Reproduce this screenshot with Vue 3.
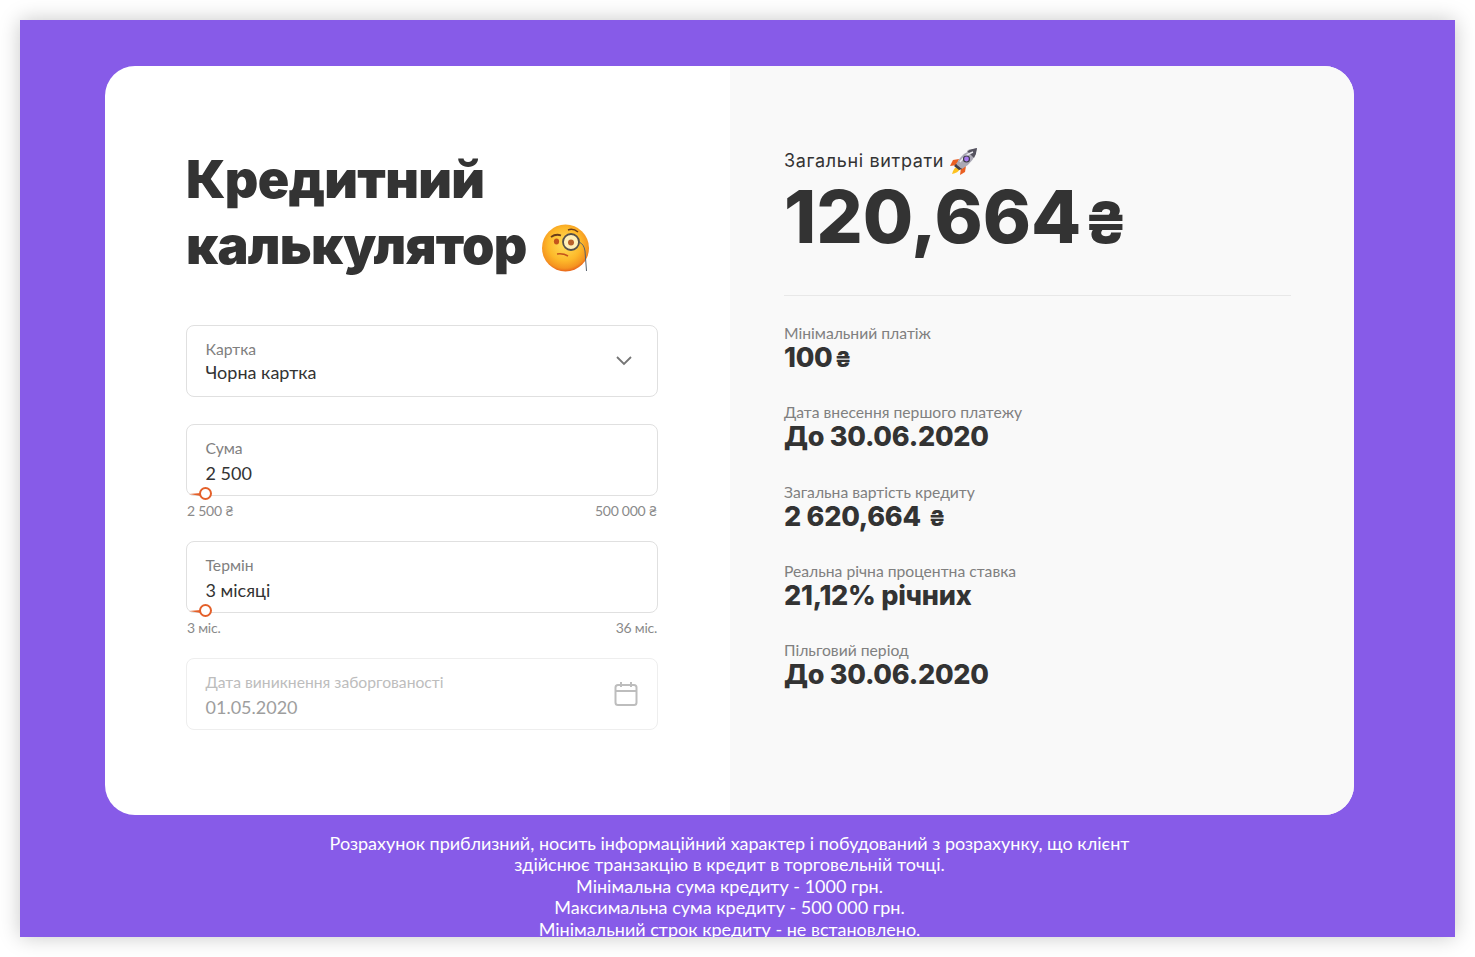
<script setup>
const stats = [
  { label: 'Мінімальний платіж', value: '100', cur: '₴' },
  { label: 'Дата внесення першого платежу', value: 'До 30.06.2020' },
  { label: 'Загальна вартість кредиту', value: '2 620,664 ', cur: '₴' },
  { label: 'Реальна річна процентна ставка', value: '21,12% річних' },
  { label: 'Пільговий період', value: 'До 30.06.2020' }
]
const note = [
  'Розрахунок приблизний, носить інформаційний характер і побудований з розрахунку, що клієнт здійснює транзакцію в кредит в торговельній точці.',
  'Мінімальна сума кредиту - 1000 грн.',
  'Максимальна сума кредиту - 500 000 грн.',
  'Мінімальний строк кредиту - не встановлено.'
]
</script>

<template>
  <div class="page">
    <div class="frame">
      <main class="card">
        <section class="left">
          <h1 class="title">
            Кредитний<br />калькулятор
            <svg class="face" viewBox="0 0 48 50" width="48" height="50">
              <defs>
                <radialGradient id="fg" cx="48%" cy="42%" r="58%">
                  <stop offset="0" stop-color="#ffdf5c" />
                  <stop offset=".6" stop-color="#fdb92a" />
                  <stop offset=".88" stop-color="#f59420" />
                  <stop offset="1" stop-color="#e8641a" />
                </radialGradient>
              </defs>
              <circle cx="23.500" cy="24" r="23.500" fill="url(#fg)" />
              <path d="M9 13q5-3.500 10-1.500" fill="none" stroke="#6b3d1a" stroke-width="1.800" />
              <ellipse cx="14.500" cy="17.500" rx="2.600" ry="3" fill="#c4541c" />
              <circle cx="29" cy="18" r="8" fill="#fff0b8" stroke="#55504a" stroke-width="1.800" />
              <circle cx="29" cy="18.500" r="3" fill="#b8602a" />
              <path d="M26 6q5-2 10 2" fill="none" stroke="#6b3d1a" stroke-width="1.500" />
              <path d="M37 18q5 2 6 9l1.500 20" fill="none" stroke="#55606c" stroke-width="1" />
              <path d="M15 30q6-1 11 2" fill="none" stroke="#c4541c" stroke-width="1.500" />
            </svg>
          </h1>

          <div class="field select">
            <div>
              <div class="label">Картка</div>
              <div class="value">Чорна картка</div>
            </div>
            <svg class="chev" viewBox="0 0 18 12" width="18" height="12">
              <path d="M2 2l7 7 7-7" fill="none" stroke="#757575" stroke-width="1.800" />
            </svg>
          </div>

          <div class="slider-group">
            <div class="field">
              <div>
                <div class="label">Сума</div>
                <div class="value">2 500</div>
              </div>
              <span class="track"></span><span class="thumb"></span>
            </div>
            <div class="range"><span>2 500 ₴</span><span>500 000 ₴</span></div>
          </div>

          <div class="slider-group">
            <div class="field">
              <div>
                <div class="label">Термін</div>
                <div class="value">3 місяці</div>
              </div>
              <span class="track"></span><span class="thumb"></span>
            </div>
            <div class="range"><span>3 міс.</span><span>36 міс.</span></div>
          </div>

          <div class="field disabled">
            <div>
              <div class="label">Дата виникнення заборгованості</div>
              <div class="value">01.05.2020</div>
            </div>
            <svg class="cal" viewBox="0 0 24 26" width="24" height="26">
              <rect x="1.500" y="4" width="21" height="20" rx="2.500" fill="none" stroke="#bdbdbd" stroke-width="2" />
              <path d="M1.500 10h21M7 1v5M17 1v5" fill="none" stroke="#bdbdbd" stroke-width="2" />
            </svg>
          </div>
        </section>

        <section class="right">
          <div class="total-label">
            Загальні витрати
            <svg class="rocket" viewBox="0 0 28 28" width="28" height="28">
              <path d="M9 12L3 13 0 19l7-1z" fill="#ea5f22" />
              <path d="M16 19l-1 6-5 3 1-7z" fill="#ea5f22" />
              <path d="M8 19q-4 1-6 8 6-1 8-5z" fill="#fdc21f" />
              <path d="M6 17Q13 4 27 1q-2 14-15 21z" fill="#aaa8b4" />
              <path d="M27 1q-6 1-10 3l7 7q2.500-4 3-10z" fill="#55535f" />
              <path d="M6 17l6 5-3 1-5-4z" fill="#3f3d4a" />
              <path d="M10 15Q15 8 23 5" fill="none" stroke="#e8e8ee" stroke-width="1.400" />
              <circle cx="16.500" cy="12" r="3" fill="#a678ee" stroke="#3f3d4a" stroke-width="1.200" />
            </svg>
          </div>
          <div class="total">120,664<span class="total-cur">₴</span></div>
          <hr class="divider" />
          <div class="stats">
            <div v-for="s in stats" :key="s.label" class="stat">
              <div class="stat-label">{{ s.label }}</div>
              <div class="stat-value">{{ s.value }}<span v-if="s.cur" class="stat-cur">{{ s.cur }}</span></div>
            </div>
          </div>
        </section>
      </main>
      <footer class="note">
        <div v-for="n in note" :key="n">{{ n }}</div>
      </footer>
    </div>
  </div>
</template>

<style scoped>
.page {
  height: 957px;
  box-sizing: border-box;
  padding: 20px 20px 20px;
  overflow: hidden;
  font-family: Lato, "Noto Sans", sans-serif;
  color: #333;
}
.frame {
  height: 917px;
  background: #875be8;
  padding: 46px 101px 0 85px;
  box-sizing: border-box;
  overflow: hidden;
  box-shadow: 0 0 20px rgba(0, 0, 0, 0.22);
}
.card {
  height: 749px;
  display: flex;
  background: #fff;
  border-radius: 30px;
  overflow: hidden;
}
.left {
  width: 625px;
  box-sizing: border-box;
  padding: 81px 72px 0 81px;
}
.title {
  margin: 0 0 46px;
  font-family: Inter, sans-serif;
  font-size: 52px;
  line-height: 66px;
  font-weight: 900;
  letter-spacing: -0.7px;
  color: #333;
}
.face {
  vertical-align: -10px;
  margin-left: 6px;
}
.field {
  position: relative;
  height: 72px;
  box-sizing: border-box;
  border: 1px solid #e0e0e0;
  border-radius: 8px;
  padding: 13px 18.500px 0;
  display: flex;
  justify-content: space-between;
}
.select {
  margin-bottom: 27px;
}
.select .value {
  margin-top: 2px;
}
.label {
  font-size: 15.700px;
  line-height: 20px;
  color: #808080;
}
.value {
  margin-top: 4px;
  font-size: 18px;
  line-height: 23px;
  color: #333;
}
.chev {
  margin: 16px 6px 0 0;
}
.cal {
  margin: 9px 1px 0 0;
}
.slider-group {
  height: 117px;
}
.track {
  position: absolute;
  left: 2px;
  bottom: -1px;
  width: 12px;
  height: 3px;
  background: #e4602a;
  clip-path: polygon(0 35%, 100% 0, 100% 100%);
}
.thumb {
  position: absolute;
  left: 12px;
  bottom: -5px;
  width: 13px;
  height: 13px;
  box-sizing: border-box;
  border: 2px solid #e4602a;
  border-radius: 50%;
  background: #fff;
}
.range {
  display: flex;
  justify-content: space-between;
  margin-top: 6px;
  padding: 0 1px;
  font-size: 14px;
  line-height: 18px;
  color: #8a8a8a;
  letter-spacing: -0.25px;
}
.disabled .label {
  color: #bdbdbd;
}
.disabled .value {
  color: #9e9e9e;
}
.disabled {
  border-color: #eeeeee;
}
.right {
  flex: 1;
  background: #f9f9f9;
  box-sizing: border-box;
  padding: 80px 63px 0 54px;
}
.total-label {
  font-family: Inter, sans-serif;
  font-size: 18px;
  line-height: 30px;
  letter-spacing: 0.65px;
  color: #333;
}
.rocket {
  vertical-align: -8px;
}
.total {
  font-family: Inter, sans-serif;
  font-size: 73px;
  line-height: 82px;
  font-weight: 800;
  color: #333;
}
.total-cur {
  font-size: 57px;
  margin-left: 2px;
}
.divider {
  border: 0;
  border-top: 1px solid #e8e8e8;
  margin: 31px 0 28px;
}
.stat {
  height: 79.250px;
}
.stat-label {
  font-size: 15.700px;
  line-height: 18px;
  color: #808080;
}
.stat-value {
  margin-top: 1px;
  height: 29px;
  font-family: Inter, sans-serif;
  font-size: 27px;
  line-height: 30px;
  font-weight: 800;
  letter-spacing: -0.25px;
  color: #333;
}
.stat-cur {
  font-size: 22px;
  margin-left: 2px;
}
.note {
  margin: 18px auto 0;
  width: 830px;
  text-align: center;
  color: #fff;
  font-size: 18px;
  line-height: 21.400px;
}
</style>

<style>
body {
  background: #fff;
}
</style>
